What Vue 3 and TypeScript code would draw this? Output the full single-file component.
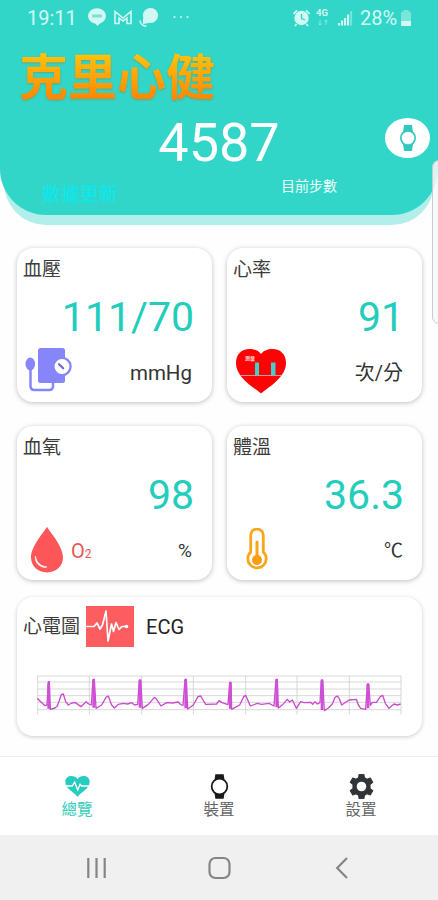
<script setup lang="ts">
interface Metric {
  id: string
  title: string
  value: string
  unit: string
}

const metrics: Metric[] = [
  { id: 'pressure', title: '血壓', value: '111/70', unit: 'mmHg' },
  { id: 'heart', title: '心率', value: '91', unit: '次/分' },
  { id: 'oxygen', title: '血氧', value: '98', unit: '%' },
  { id: 'temperature', title: '體溫', value: '36.3', unit: '℃' },
]

const gridRows: number[] = [258, 276, 297, 317, 337, 359]
const gridCols: number[] = [113, 268, 425, 580, 737, 891, 1048, 1203]

const ecgPoints: string = [
  '112,325 122,335 135,347 141,345 145,275 148,275 151,358 165,354 172,348 184,314 190,312 197,335 205,345 215,339 226,338 243,350 258,335 266,342 274,345',
  '279,268 283,268 288,355 305,345 318,322 325,318 335,345 343,354 355,343 370,340 383,342 395,338 404,345 413,343 418,270 422,270 427,355 445,343 463,322 470,328',
  '483,348 500,338 518,339 535,336 542,344 549,346 555,268 559,268 563,357 580,345 594,320 602,318 617,343 650,342 657,332 666,338 684,344',
  '689,277 693,277 695,358 710,350 719,345 731,320 737,316 751,348 772,340 785,343 807,340 822,348 828,268 832,268 835,354 848,344 862,328 869,336 877,330 889,355 902,335 912,338 932,337 938,343 945,335 952,342 960,338',
  '964,270 968,270 973,362 985,354 997,342 1005,322 1012,318 1018,326 1025,345 1047,330 1069,328 1075,345 1082,355 1097,358 1102,282 1106,282 1111,346 1117,337 1129,337 1141,320 1148,316 1156,340 1167,355 1182,342 1192,345 1202,342',
].join(' ')

const ecgSpikes: string =
  'M146 280V356M281 270V353M420 272V353M557 270V355M691 279V356M830 270V352M966 272V360M1104 284V355'
</script>

<template>
  <div class="screen">
    <header class="hero">
      <div class="status">
        <span class="clock">19:11</span>
        <svg class="status-left" viewBox="0 0 106 24">
          <ellipse cx="9" cy="10" rx="9" ry="7.8" />
          <path d="M5 15 L9.5 20 L14 15Z" />
          <rect class="line-mark" x="4" y="8.5" width="10" height="3" rx="1" />
          <path class="outline" d="M27 17.5V5.5L35 12L43 5.5V17.5H39V12L35 15L31 12V17.5Z" />
          <circle cx="62.5" cy="9.5" r="7.6" />
          <path d="M55 12 L55 18 L61 17Z" />
          <path class="outline" d="M52 14.5C52.5 19 55 20 58.5 20.3" />
          <circle cx="86.5" cy="11" r="1.1" />
          <circle cx="93" cy="11" r="1.1" />
          <circle cx="99.5" cy="11" r="1.1" />
        </svg>
        <svg class="status-right" viewBox="0 0 64 24">
          <circle cx="9.5" cy="12" r="7.2" />
          <path class="ears" d="M1.5 8L5 4.3M14 4.3L17.5 8M4.5 18L3 20M14.5 18L16 20" />
          <path class="alarm-hand" d="M9.5 8V12.5L13 14" />
          <text class="network" x="24" y="10">4G</text>
          <path class="faint" d="M28 14V19M26.5 17.5L28 19L29.5 17.5M34 19V14M32.5 15.5L34 14L35.5 15.5" />
          <path d="M46 19.5V17h2.1v2.5zM49 19.5V14.5h2.1v5zM52 19.5V12h2.1v7.5zM55 19.5V8.5h2.1v11z" />
          <path class="pale" d="M58.1 19.5V5h2v14.5z" />
        </svg>
        <span class="percent">28%</span>
        <svg class="battery" viewBox="0 0 12 18">
          <path class="pale" d="M1 17V4Q1 2.5 3 2.5L4 1H8L9 2.5Q11 2.5 11 4V17Z" />
          <rect x="1" y="12" width="10" height="5" rx="1" />
        </svg>
      </div>
      <h1 class="brand">克里心健</h1>
      <div class="steps">4587</div>
      <div class="hero-foot">
        <span class="refresh">數據更新</span>
        <span class="steps-label">目前步數</span>
      </div>
      <button class="watch-button" aria-label="watch">
        <svg viewBox="0 0 18 28">
          <path d="M5 1H13L14 8H4ZM4 20H14L13 27H5Z" />
          <circle cx="9" cy="14" r="8" />
          <circle class="dial" cx="9" cy="14" r="6.3" />
        </svg>
      </button>
    </header>

    <main class="content">
      <section class="metrics">
        <article v-for="m in metrics" :key="m.id" class="card metric">
          <h2 class="label">{{ m.title }}</h2>
          <div class="value">{{ m.value }}</div>
          <div class="metric-foot" :class="m.id">
            <svg v-if="m.id === 'pressure'" class="icon-pressure" viewBox="0 0 47 45">
              <rect x="13" y="1" width="27" height="35" rx="2.5" fill="#8785fa" />
              <ellipse cx="5.3" cy="17" rx="4.8" ry="6.5" fill="#8785fa" />
              <path d="M5.5 20V39Q5.5 43 9.5 43H24Q28 43 28 39V35" fill="none" stroke="#8785fa" stroke-width="2.5" />
              <circle cx="37" cy="19.5" r="8.6" fill="#fff" stroke="#8785fa" stroke-width="2.3" />
              <path d="M34 17.2L38.2 21.3" stroke="#6966cf" stroke-width="2.1" stroke-linecap="round" />
            </svg>
            <svg v-else-if="m.id === 'heart'" class="icon-heart" viewBox="0 0 52 46">
              <path d="M26 45.5C20 40 1 30 1 15C1 6 7 1 14 1C20 1 24 3 26 6C28 3 32 1 38 1C45 1 51 6 51 15C51 30 32 40 26 45.5Z" fill="#fe0205" />
              <path d="M6 27.5H46" stroke="#d99a9a" stroke-width="1" />
              <rect x="20" y="14.5" width="4" height="12.8" fill="#43d0cc" />
              <rect x="36" y="14.5" width="4.5" height="12.8" fill="#43d0cc" />
              <text x="10" y="12" class="heart-mark">測量</text>
            </svg>
            <template v-else-if="m.id === 'oxygen'">
              <svg class="icon-drop" viewBox="0 0 34 47">
                <path d="M17 .7C14.5 5.5 1 20 1 31.3C1 40.5 8 46.4 17 46.4S33 40.5 33 31.3C33 20 19.5 5.5 17 .7Z" fill="#fd5658" />
                <path d="M5.5 30C6.3 36.5 10.5 40 17 41C14.8 42.3 9.5 40.5 7.2 37.5C5.5 35 5 32.5 5.5 30Z" fill="#fff" stroke="#fff" stroke-width=".6" />
              </svg>
              <span class="o2">O<small>2</small></span>
            </template>
            <svg v-else class="icon-thermo" viewBox="0 0 22 43">
              <path d="M4.7 24V7.3a6.3 6.3 0 0 1 12.6 0V24a9.2 9.2 0 1 1 -12.6 0Z" fill="#fff" stroke="#f9a61a" stroke-width="2.8" />
              <path d="M11 14V31" stroke="#f9a61a" stroke-width="3" stroke-linecap="round" />
              <circle cx="11" cy="32" r="5" fill="#f99d0d" />
            </svg>
            <span class="unit">{{ m.unit }}</span>
          </div>
        </article>
      </section>

      <section class="card ecg">
        <div class="ecg-head">
          <h2 class="label">心電圖</h2>
          <svg class="icon-ecg" viewBox="0 0 48 41">
            <rect width="48" height="41" fill="#fd5d5e" />
            <path d="M0 20.5H8L11 17L14 23L16.5 19L20 5L22 35L25.5 18L27.5 25.5L30 16.5L33 23.5L36 20.5H41" fill="none" stroke="#fff" stroke-width="1.7" stroke-linejoin="round" />
            <circle cx="40.5" cy="20.5" r="1.8" fill="#fff" />
          </svg>
          <span class="ecg-name">ECG</span>
        </div>
        <svg class="chart" viewBox="105 252 1110 126">
          <path v-for="y in gridRows" :key="`r${y}`" :d="`M113 ${y}H1203`" class="grid-line" />
          <path v-for="x in gridCols" :key="`c${x}`" :d="`M${x} 258V374`" class="grid-line" />
          <polyline :points="ecgPoints" class="wave" />
          <path :d="ecgSpikes" class="spike" />
        </svg>
      </section>
    </main>

    <nav class="tabs">
      <a class="tab active">
        <svg viewBox="0 0 24 24">
          <path d="M12 21.8C9 18 .3 14 .3 7.5C.3 .8 9.4 .4 12 5C14.6 .4 23.7 .8 23.7 7.5C23.7 14 15 18 12 21.8Z" fill="#24cdbd" />
          <path d="M0 11.5H7L9.3 8L12.2 15.3L14.5 9.8L16 11.5H24" fill="none" stroke="#fff" stroke-width="1.3" />
        </svg>
        <span>總覽</span>
      </a>
      <a class="tab">
        <svg viewBox="0 0 24 24">
          <path d="M8 .2H16L16.8 6H7.2ZM7.2 18H16.8L16 23.8H8Z" fill="#17191b" />
          <circle cx="12" cy="12" r="7.5" fill="#fff" stroke="#17191b" stroke-width="1.7" />
        </svg>
        <span>裝置</span>
      </a>
      <a class="tab">
        <svg viewBox="0 0 24 24">
          <path d="M9.7 .3H14.3L14.8 3.6L17.3 5L20.4 3.8L22.8 7.9L20.2 10V14L22.8 16.1L20.4 20.2L17.3 19L14.8 20.4L14.3 23.7H9.7L9.2 20.4L6.7 19L3.6 20.2L1.2 16.1L3.8 14V10L1.2 7.9L3.6 3.8L6.7 5L9.2 3.6Z" fill="#303438" stroke="#303438" stroke-linejoin="round" />
          <circle cx="12" cy="12" r="4.6" fill="#fff" />
        </svg>
        <span>設置</span>
      </a>
    </nav>

    <footer class="system">
      <svg viewBox="0 0 24 24"><path d="M4.3 2V22M12.5 2V22M20.7 2V22" /></svg>
      <svg viewBox="0 0 24 24"><rect x="2.5" y="2" width="20" height="20" rx="6" /></svg>
      <svg viewBox="0 0 24 24"><path d="M17 2L7.2 12L17 22" /></svg>
    </footer>

    <div class="edge-handle"></div>
  </div>
</template>

<style>
body {
  margin: 0;
  background: #fff;
}
</style>

<style scoped>
.screen {
  position: relative;
  display: flex;
  flex-direction: column;
  width: 438px;
  height: 900px;
  overflow: hidden;
  background: #fefefe;
  font-family: Roboto, "Noto Sans CJK TC", sans-serif;
  color: #222;
}
.hero {
  position: relative;
  box-sizing: border-box;
  height: 215px;
  flex: none;
  background: #32d6c8;
  border-radius: 0 0 46px 46px;
  box-shadow: 0 14px 0 -4px #b2efea;
}
.status {
  display: flex;
  align-items: center;
  height: 36px;
  padding-left: 27px;
  fill: #d2f8f4;
  color: #d2f8f4;
}
.clock {
  width: 61px;
  font-size: 20px;
  line-height: 36px;
}
.status-left {
  width: 106px;
  height: 24px;
}
.line-mark {
  fill: #7fdfd6;
}
.outline {
  fill: none;
  stroke: #d2f8f4;
  stroke-width: 1.6;
}
.status-right {
  width: 64px;
  height: 24px;
  margin: -1px 4px 0 98px;
}
.ears,
.faint {
  fill: none;
  stroke: #d2f8f4;
  stroke-width: 1.8;
}
.faint {
  stroke-width: 1;
  opacity: 0.5;
}
.alarm-hand {
  fill: none;
  stroke: #32d6c8;
  stroke-width: 1.3;
}
.network {
  font-size: 9.5px;
  font-weight: 700;
}
.pale {
  opacity: 0.45;
}
.percent {
  width: 39px;
  font-size: 20px;
  line-height: 36px;
}
.battery {
  width: 12px;
  height: 18px;
  margin-left: 1px;
}
.brand {
  width: 200px;
  height: 70px;
  margin: 8px 0 0 19px;
  font-size: 49px;
  font-weight: 700;
  line-height: 70px;
  color: transparent;
  background: linear-gradient(#ffc20c 15%, #ff8500 80%);
  background-clip: text;
  -webkit-background-clip: text;
  filter: drop-shadow(0 1px 1px rgba(150, 120, 40, 0.5));
}
.steps {
  height: 59px;
  font-size: 54px;
  line-height: 58px;
  text-align: center;
  color: #fff;
}
.hero-foot {
  display: flex;
  padding-left: 42px;
  line-height: 20px;
}
.refresh {
  width: 239px;
  padding-top: 12px;
  font-size: 19px;
  color: #08eaf0;
}
.steps-label {
  padding-top: 3px;
  font-size: 14px;
  color: #effffd;
}
.watch-button {
  position: absolute;
  top: 118px;
  right: 8px;
  display: grid;
  place-items: center;
  width: 45px;
  height: 40px;
  padding: 0;
  border: 0;
  border-radius: 50%;
  background: #fff;
}
.watch-button svg {
  width: 18px;
  height: 28px;
  fill: #32c9bd;
}
.watch-button .dial {
  fill: #fff;
}
.content {
  box-sizing: border-box;
  display: flex;
  flex-direction: column;
  gap: 17.5px;
  height: 541px;
  padding: 33px 16px 0 17px;
}
.metrics {
  display: grid;
  grid-template-columns: 195px 195px;
  grid-template-rows: 154px 154px;
  gap: 23.5px 15px;
}
.card {
  box-sizing: border-box;
  border-radius: 16px;
  background: #fff;
  box-shadow: 0 1px 5px rgba(0, 0, 0, 0.25);
}
.metric {
  display: flex;
  flex-direction: column;
  padding: 10px 18px 0 6px;
}
.label {
  margin: 0;
  font-size: 19px;
  font-weight: 400;
  line-height: 24px;
  color: #3c3c3c;
}
.value {
  margin-top: 11px;
  font-size: 41px;
  line-height: 48px;
  text-align: right;
  color: #22cdbc;
}
.metric-foot {
  display: flex;
  height: 48px;
  margin-top: 6px;
}
.unit {
  margin-left: auto;
  padding-top: 13px;
  font-size: 20.5px;
  line-height: 26px;
  color: #333;
}
.metric-foot.pressure .unit {
  margin-right: 2px;
}
.metric-foot.oxygen .unit {
  margin-right: 2px;
  font-size: 19px;
}
.metric-foot.heart .unit {
  margin-right: 1px;
  font-size: 20px;
}
.metric-foot.temperature .unit {
  margin-right: 1px;
  font-size: 19px;
}
.icon-pressure {
  width: 47px;
  height: 45px;
  margin: 0 0 0 2px;
}
.icon-heart {
  width: 52px;
  height: 46px;
  margin: 1px 0 0 2px;
}
.heart-mark {
  font-size: 5px;
  font-weight: 700;
  fill: #ffdcdc;
}
.icon-drop {
  width: 34px;
  height: 47px;
  margin: 1px 0 0 7px;
}
.o2 {
  padding: 13px 0 0 7px;
  font-size: 20px;
  line-height: 26px;
  color: #ea5757;
}
.o2 small {
  font-size: 12px;
}
.icon-thermo {
  width: 22px;
  height: 43px;
  margin: 3px 0 0 13px;
}
.ecg {
  height: 139px;
  padding: 8.5px 0 0 6px;
  box-shadow: 0 1px 4px rgba(0, 0, 0, 0.2);
}
.ecg-head {
  display: flex;
  align-items: center;
}
.ecg-head .label {
  padding-top: 2px;
}
.icon-ecg {
  width: 48px;
  height: 41px;
  margin: 0 12px 0 6px;
}
.ecg-name {
  padding-top: 1px;
  font-size: 20px;
}
.chart {
  display: block;
  width: 370px;
  height: 42px;
  margin: 27.5px 0 0 12px;
}
.grid-line {
  fill: none;
  stroke: #cfcfcf;
  stroke-width: 2.5;
}
.wave {
  fill: none;
  stroke: #ca4bd0;
  stroke-width: 4;
  stroke-linejoin: round;
}
.spike {
  fill: none;
  stroke: #cf4fd6;
  stroke-width: 8;
}
.tabs {
  box-sizing: border-box;
  display: grid;
  grid-template-columns: repeat(3, 142px);
  justify-content: center;
  flex: none;
  height: 79px;
  padding-top: 17px;
  border-top: 1px solid #efefef;
  background: #fff;
}
.tab {
  display: flex;
  flex-direction: column;
  align-items: center;
  font-size: 15.5px;
  line-height: 22px;
  color: #666;
}
.tab.active {
  color: #36cbbd;
}
.tab svg {
  width: 25px;
  height: 25px;
}
.system {
  display: grid;
  grid-template-columns: repeat(3, 123px);
  place-items: center;
  place-content: center;
  flex: none;
  height: 65px;
  background: #f0f0f0;
}
.system svg {
  width: 24px;
  height: 24px;
  fill: none;
  stroke: #858585;
  stroke-width: 2.2;
}
.edge-handle {
  position: absolute;
  top: 160px;
  right: -8px;
  box-sizing: border-box;
  width: 14px;
  height: 164px;
  border: 1px solid #c9cccc;
  border-radius: 7px;
  background: rgba(246, 250, 250, 0.85);
}
</style>
